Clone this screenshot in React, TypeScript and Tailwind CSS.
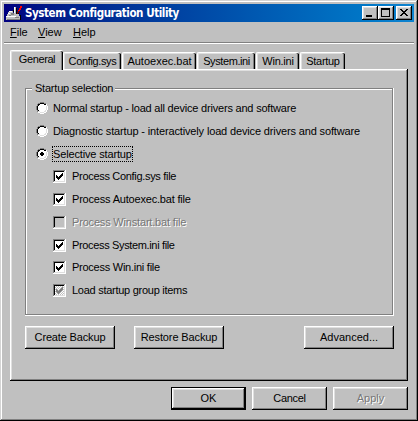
import React from "react";

const raised =
  "shadow-[inset_-1px_-1px_#000,inset_1px_1px_#fff,inset_-2px_-2px_#808080,inset_2px_2px_#dfdfdf]";

function AppIcon() {
  return (
    <svg width="16" height="16" viewBox="0 0 16 16" shapeRendering="crispEdges">
      <path d="M3 6h4v3h6v2h1v4H0v-4h1V9h1V7h1z" fill="#c0c0c0" />
      <path d="M8 2h2v7H8z" fill="#c0c0c0" />
      <path d="M8 2h1v6H8zM3 6h3v1H3zM2 8h2v1H2zM0 11h10v1H0z" fill="#fff" />
      <path d="M5 8h3v2H5zM3 10h2v1H3zM9 12h4v1H9zM1 14h13v1H1z" fill="#808080" />
      <path d="M10 3h1v6h-1zM7 5h1v2H7zM11 8h2v1h-2zM14 10h1v5h-1z" fill="#000" />
      <path d="M14 1h2v2h-1v2h-1v1h-1v2h-1V5h1V3h1z" fill="#ff0000" />
      <path d="M12 6h1v2h-1v1h-1V7h1z" fill="#800000" />
    </svg>
  );
}

function TitleButton({ kind }: { kind: "min" | "max" | "close" }) {
  return (
    <button className={`block h-[14px] w-[16px] bg-[#c0c0c0] ${raised}`}>
      <svg width="16" height="14" viewBox="0 0 16 14" shapeRendering="crispEdges">
        {kind === "min" && <path d="M4 9h6v2H4z" />}
        {kind === "max" && <path fillRule="evenodd" d="M3 2h9v9H3zM4 4h7v6H4z" />}
        {kind === "close" && (
          <path d="M4 3h2v1h1v1h2V4h1V3h2v1h-1v1h-1v1H9v1h1v1h1v1h1v1h-2V9H9V8H7v1H6v1H4V9h1V8h1V7h1V6H6V5H5V4H4z" />
        )}
      </svg>
    </button>
  );
}

function Tab({ label, width, active, track }: { label: string; width: string; active?: boolean; track: string }) {
  return (
    <div
      className={`relative flex shrink-0 justify-center rounded-t-[2px] border-t border-l border-white bg-[#c0c0c0] shadow-[inset_-1px_0_#000,inset_-2px_0_#808080,inset_1px_1px_#dfdfdf] ${width} ${
        active ? "z-10 h-[20px] pt-[2px]" : "h-[17px] pt-[2px]"
      }`}
    >
      <span className={track}>{label}</span>
    </div>
  );
}

function Radio({ checked }: { checked?: boolean }) {
  return (
    <svg width="12" height="12" viewBox="0 0 12 12" shapeRendering="crispEdges" className="shrink-0">
      <path d="M4 1h4v1h2v2h1v4h-1v2H8v1H4v-1H2V8H1V4h1V2h2z" fill="#fff" />
      <path d="M4 0h4v1h2v1H8V1H4v1H2v2H1v4h1v2H1V8H0V4h1V2h1V1h2z" fill="#808080" />
      <path d="M4 1h4v1h2v1H8V2H4v1H3v1H2v4h1v1H2V8H1V4h1V2h2z" fill="#000" />
      <path d="M10 3h1v5h-1v2H8v1H4v-1H2V9h2v1h4V9h1V8h1z" fill="#dfdfdf" />
      <path d="M10 2h1v2h1v4h-1v2h-1v1H8v1H4v-1H2v-1h2v1h4v-1h2V8h1V4h-1z" fill="#fff" />
      {checked && <path d="M5 4h2v1h1v2H7v1H5V7H4V5h1z" fill="#000" />}
    </svg>
  );
}

function Check({ state }: { state: "on" | "off" | "gray" }) {
  return (
    <svg width="13" height="13" viewBox="0 0 13 13" shapeRendering="crispEdges" className="shrink-0">
      <defs>
        <pattern id="dither" width="2" height="2" patternUnits="userSpaceOnUse">
          <path d="M0 0h2v2H0z" fill="#c0c0c0" />
          <path d="M0 0h1v1H0zM1 1h1v1H1z" fill="#fff" />
        </pattern>
      </defs>
      <path d="M0 0h13v13H0z" fill="#fff" />
      <path d="M0 0h12v1H1v11H0z" fill="#808080" />
      <path d="M1 1h10v1H2v9H1z" fill="#000" />
      <path d="M11 1h1v11H1v-1h10z" fill="#dfdfdf" />
      <path d="M2 2h9v9H2z" fill={state === "on" ? "#fff" : state === "off" ? "#c0c0c0" : "url(#dither)"} />
      {state !== "off" && (
        <path
          d="M3 5h1v1h1v1h1V6h1V5h1V4h1V3h1v3H9v1H8v1H7v1H6v1H5V9H4V8H3z"
          fill={state === "on" ? "#000" : "#808080"}
        />
      )}
    </svg>
  );
}

function PushButton({ label, className, track, primary, disabled }: {
  label: string; className: string; track: string; primary?: boolean; disabled?: boolean;
}) {
  return (
    <button
      className={`flex h-[23px] shrink-0 items-center justify-center ${className} ${
        primary
          ? "shadow-[inset_0_0_0_1px_#000,inset_-2px_-2px_#000,inset_2px_2px_#fff,inset_-3px_-3px_#808080,inset_3px_3px_#dfdfdf]"
          : raised
      }`}
    >
      <span className={`${track} ${disabled ? "text-[#777] [text-shadow:1px_1px_#fff]" : ""}`}>{label}</span>
    </button>
  );
}

const checks: { label: string; state: "on" | "off" | "gray"; top: string; track: string }[] = [
  { label: "Process Config.sys file", state: "on", top: "mt-[10px]", track: "tracking-[-0.31px]" },
  { label: "Process Autoexec.bat file", state: "on", top: "mt-[10px]", track: "tracking-[-0.19px]" },
  { label: "Process Winstart.bat file", state: "off", top: "mt-[10px]", track: "tracking-[-0.18px]" },
  { label: "Process System.ini file", state: "on", top: "mt-[10px]", track: "tracking-[-0.35px]" },
  { label: "Process Win.ini file", state: "on", top: "mt-[9px]", track: "tracking-[-0.25px]" },
  { label: "Load startup group items", state: "gray", top: "mt-[10px]", track: "tracking-[-0.27px]" },
];

export default function App() {
  return (
    <div className="flex h-[421px] w-[418px] flex-col overflow-hidden bg-[#c0c0c0] p-[4px] font-['Liberation_Sans',Arial,sans-serif] text-[11px] leading-[13px] whitespace-nowrap text-black shadow-[inset_-1px_-1px_#000,inset_1px_1px_#d4d4d4,inset_-2px_-2px_#808080,inset_2px_2px_#fff]">
      <header className="flex h-[18px] shrink-0 items-center bg-linear-to-r from-[#000080] to-[#1084d0] pr-[2px] pl-[2px]">
        <AppIcon />
        <h1 className="ml-[3px] font-['DejaVu_Sans_Condensed','DejaVu_Sans',sans-serif] text-[11.5px] leading-[18px] font-bold tracking-[-0.43px] text-white">
          System Configuration Utility
        </h1>
        <div className="ml-auto flex">
          <TitleButton kind="min" />
          <TitleButton kind="max" />
          <div className="w-[2px]" />
          <TitleButton kind="close" />
        </div>
      </header>

      <nav className="flex h-[22px] shrink-0 items-start border-b border-white pt-[4px] pl-[6px] text-[11px] leading-[13px] shadow-[inset_0_-1px_#808080]">
        <span className="w-[28px]"><u>F</u>ile</span>
        <span className="w-[35px]"><u>V</u>iew</span>
        <span><u>H</u>elp</span>
      </nav>

      <div className="mt-[6px] flex h-[19px] shrink-0 items-end pl-[6px]">
        <Tab label="General" active width="w-[53px] -mb-px" track="tracking-[-0.4px]" />
        <Tab label="Config.sys" width="w-[58px]" track="tracking-[-0.35px]" />
        <Tab label="Autoexec.bat" width="ml-px w-[74px]" track="tracking-normal" />
        <Tab label="System.ini" width="ml-px w-[58px]" track="tracking-[-0.4px]" />
        <Tab label="Win.ini" width="ml-px w-[43px]" track="tracking-[-0.25px]" />
        <Tab label="Startup" width="ml-px w-[45px]" track="tracking-[-0.3px]" />
      </div>

      <main className={`ml-[6px] h-[312px] w-[398px] shrink-0 px-[15px] pt-[13px] ${raised}`}>
        <fieldset className="mt-[6px] h-[228px] w-[369px]">
          <div className="h-full border border-white">
            <div className="-mt-px -ml-px h-[227px] w-[368px] border border-[#808080] shadow-[inset_1px_1px_#fff]">
              <div className="-mt-[7px] ml-[6px] w-fit bg-[#c0c0c0] pr-[2px] pl-[3px] tracking-[-0.22px]">Startup selection</div>
              <div className="mt-[7px] flex h-[12px] items-center gap-[5px] pl-[10px]">
                <Radio />
                <span className="tracking-[-0.2px]">Normal startup - load all device drivers and software</span>
              </div>
              <div className="mt-[11px] flex h-[12px] items-center gap-[5px] pl-[10px]">
                <Radio />
                <span className="tracking-[-0.145px]">Diagnostic startup - interactively load device drivers and software</span>
              </div>
              <div className="mt-[11px] flex h-[12px] items-center gap-[4px] pl-[10px]">
                <Radio checked />
                <span className="flex h-[16px] w-[81px] items-center pl-px outline-1 -outline-offset-1 outline-dotted">
                  <span className="tracking-[-0.15px]">Selective startup</span>
                </span>
              </div>
              {checks.map((c) => (
                <div key={c.label} className={`flex h-[13px] items-center gap-[6px] pl-[27px] ${c.top}`}>
                  <Check state={c.state} />
                  <span className={`${c.track} ${c.state === "off" ? "text-[#777] [text-shadow:1px_1px_#fff]" : ""}`}>
                    {c.label}
                  </span>
                </div>
              ))}
            </div>
          </div>
        </fieldset>
        <div className="mt-[10px] flex">
          <PushButton label="Create Backup" className="w-[90px]" track="tracking-[-0.15px]" />
          <PushButton label="Restore Backup" className="ml-[19px] w-[90px]" track="tracking-[-0.12px]" />
          <PushButton label="Advanced..." className="ml-[80px] w-[90px]" track="tracking-normal" />
        </div>
      </main>

      <footer className="mt-[6px] flex shrink-0 gap-[6px] pl-[167px]">
        <PushButton label="OK" primary className="w-[75px]" track="tracking-normal" />
        <PushButton label="Cancel" className="w-[75px]" track="tracking-[-0.3px]" />
        <PushButton label="Apply" disabled className="w-[75px]" track="tracking-normal" />
      </footer>
    </div>
  );
}
